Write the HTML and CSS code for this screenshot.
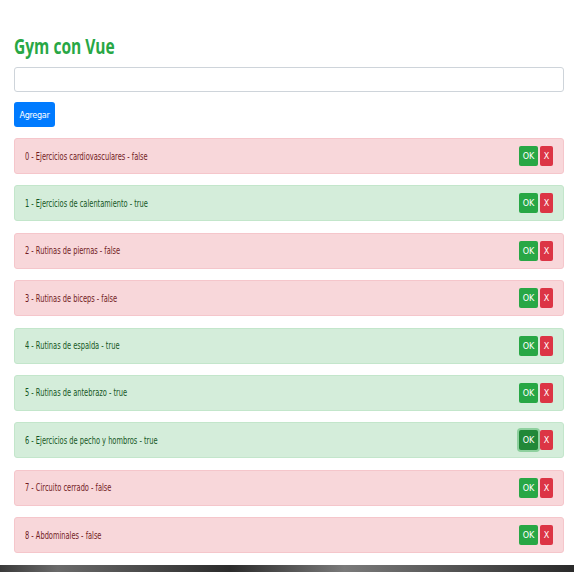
FILE: index.html
```html
<!DOCTYPE html>
<html lang="es">
<head>
<meta charset="utf-8">
<title>Gym con Vue</title>
<link rel="stylesheet" href="styles.css">
</head>
<body>
<div class="container">
  <h1 class="title"><span class="squeeze">Gym con Vue</span></h1>
  <input class="field" type="text">
  <button class="btn btn-add">Agregar</button>
  <ul class="list">
    <li class="item item-false"><span class="label">0 - Ejercicios cardiovasculares - false</span><span class="actions"><button class="btn btn-ok">OK</button><button class="btn btn-x">X</button></span></li>
    <li class="item item-true"><span class="label">1 - Ejercicios de calentamiento - true</span><span class="actions"><button class="btn btn-ok">OK</button><button class="btn btn-x">X</button></span></li>
    <li class="item item-false"><span class="label">2 - Rutinas de piernas - false</span><span class="actions"><button class="btn btn-ok">OK</button><button class="btn btn-x">X</button></span></li>
    <li class="item item-false"><span class="label">3 - Rutinas de biceps - false</span><span class="actions"><button class="btn btn-ok">OK</button><button class="btn btn-x">X</button></span></li>
    <li class="item item-true"><span class="label">4 - Rutinas de espalda - true</span><span class="actions"><button class="btn btn-ok">OK</button><button class="btn btn-x">X</button></span></li>
    <li class="item item-true"><span class="label">5 - Rutinas de antebrazo - true</span><span class="actions"><button class="btn btn-ok">OK</button><button class="btn btn-x">X</button></span></li>
    <li class="item item-true"><span class="label">6 - Ejercicios de pecho y hombros - true</span><span class="actions"><button class="btn btn-ok btn-focus">OK</button><button class="btn btn-x">X</button></span></li>
    <li class="item item-false"><span class="label">7 - Circuito cerrado - false</span><span class="actions"><button class="btn btn-ok">OK</button><button class="btn btn-x">X</button></span></li>
    <li class="item item-false"><span class="label">8 - Abdominales - false</span><span class="actions"><button class="btn btn-ok">OK</button><button class="btn btn-x">X</button></span></li>
  </ul>
</div>
<div class="taskbar"></div>
</body>
</html>
```
FILE: styles.css
```css
html, body {
  margin: 0;
  padding: 0;
  background: #fff;
  height: 572px;
  overflow: hidden;
}
body {
  font-family: "DejaVu Sans Condensed", "DejaVu Sans", sans-serif;
  color: #212529;
  position: relative;
}
.container {
  width: 550px;
  margin: 0 14px;
  padding-top: 35px;
  display: flex;
  flex-direction: column;
  align-items: flex-start;
}
.title {
  margin: 0 0 10px 0;
  font-family: "Open Sans", "DejaVu Sans", sans-serif;
  font-weight: 700;
  font-size: 21px;
  line-height: 22px;
  color: #28a745;
}
.squeeze {
  display: inline-block;
  transform: scaleX(0.74);
  transform-origin: left center;
  white-space: nowrap;
}
.field {
  box-sizing: border-box;
  width: 550px;
  height: 25px;
  margin: 0 0 10px 0;
  border: 1px solid #ced4da;
  border-radius: 3px;
  background: #fff;
  padding: 0 8px;
}
.btn {
  font-family: "DejaVu Sans Condensed", "DejaVu Sans", sans-serif;
  border: none;
  color: #fff;
  cursor: pointer;
  padding: 0;
}
.btn-add {
  background: #007bff;
  width: 41px;
  height: 25px;
  border-radius: 3px;
  font-size: 9px;
  letter-spacing: -0.3px;
  margin-bottom: 11px;
}
.list {
  list-style: none;
  margin: 0;
  padding: 0;
  width: 550px;
  display: flex;
  flex-direction: column;
  gap: 11.4px;
}
.item {
  box-sizing: border-box;
  height: 36px;
  border-radius: 3px;
  border: 1px solid;
  padding: 0 10px 0 10px;
  display: flex;
  align-items: center;
  justify-content: space-between;
}
.label {
  display: inline-block;
  font-size: 10px;
  white-space: nowrap;
  transform: scaleX(0.74);
  transform-origin: left center;
}
.item-false {
  background: #f8d7da;
  border-color: #f5c6cb;
  color: #721c24;
}
.item-true {
  background: #d4edda;
  border-color: #c3e6cb;
  color: #155724;
}
.actions {
  display: flex;
  gap: 2px;
}
.btn-ok, .btn-x {
  height: 20px;
  border-radius: 2px;
  font-size: 9px;
}
.btn-ok {
  width: 19px;
  background: #28a745;
}
.btn-x {
  width: 13px;
  background: #dc3545;
}
.btn-focus {
  box-shadow: 0 0 0 2px rgba(72, 180, 97, 0.5);
  background: #218838;
}
.taskbar {
  position: absolute;
  left: 0;
  right: 0;
  bottom: 0;
  height: 7px;
  background: linear-gradient(90deg, #3a3a3a, #6a6a6a 10%, #2b2b2b 40%, #7a7a7a 60%, #2a2a2a 100%);
}
```
